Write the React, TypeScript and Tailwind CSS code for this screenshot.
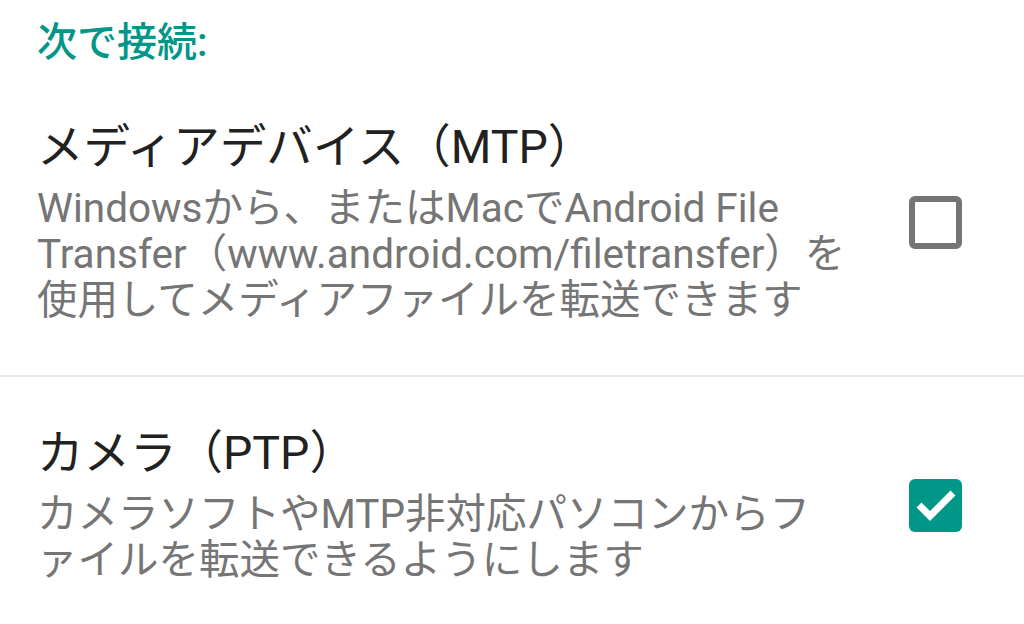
import React from 'react';

const font = { fontFamily: 'Roboto, "Noto Sans CJK JP", sans-serif' };

type Item = {
  title: string;
  summary: string;
  checked: boolean;
};

const items: Item[] = [
  {
    title: 'メディアデバイス（MTP）',
    summary: 'Windowsから、またはMacでAndroid File Transfer（www.android.com/filetransfer）を使用してメディアファイルを転送できます',
    checked: false,
  },
  {
    title: 'カメラ（PTP）',
    summary: 'カメラソフトやMTP非対応パソコンからファイルを転送できるようにします',
    checked: true,
  },
];

function Checkbox({ checked }: { checked: boolean }) {
  if (checked) {
    return (
      <div className="w-[53px] h-[53px] shrink-0 rounded-[6px] bg-[#009688] flex items-center justify-center">
        <svg width="53" height="53" viewBox="0 0 53 53">
          <path d="M10 26 L21 37 L44 14" fill="none" stroke="#ffffff" strokeWidth="7" />
        </svg>
      </div>
    );
  }
  return <div className="w-[53px] h-[53px] shrink-0 rounded-[6px] border-[6px] border-[#757575]" />;
}

export default function App() {
  return (
    <div lang="ja" className="w-[1024px] h-[624px] bg-white overflow-hidden" style={font}>
      <div className="pl-[37px] pt-[20px] text-[40px] leading-[46px] font-medium text-[#009688]">
        次で接続:
      </div>

      {items.map((item, index) => (
        <div key={item.title}>
          {index > 0 && <div className="h-[2px] bg-[#e6e6e6]" />}
          <div
            className={`flex items-center pl-[37px] pr-[62px] ${
              index === 0 ? 'pt-[55px] pb-[52px]' : 'pt-[50px]'
            }`}
          >
            <div className="w-[811px] mr-[61px]">
              <p className="text-[46.5px] leading-[52px] text-[#212121] mb-[12px]">{item.title}</p>
              <p className="text-[40.5px] leading-[46px] text-[#757575]">{item.summary}</p>
            </div>
            <Checkbox checked={item.checked} />
          </div>
        </div>
      ))}
    </div>
  );
}
